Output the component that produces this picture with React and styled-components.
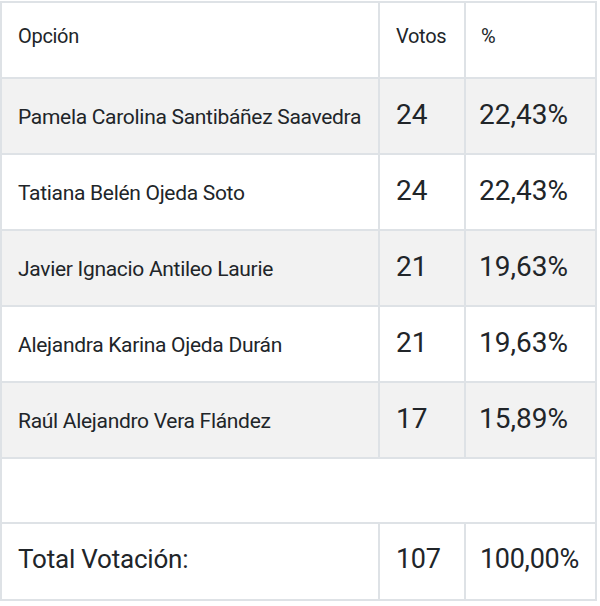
import React from "react";
import styled, { createGlobalStyle } from "styled-components";

const Global = createGlobalStyle`
  html, body { margin: 0; padding: 0; background: #fff; }
  body { font-family: Roboto, "Noto Sans", sans-serif; color: #212529; }
`;

const Wrap = styled.div`
  padding-top: 1px;
`;

const Table = styled.table`
  width: 597px;
  border-collapse: collapse;
  table-layout: fixed;
  border: 2px solid #dee2e6;
`;

const Row = styled.tr`
  height: ${(p) => p.$h}px;
  background: ${(p) => (p.$striped ? "#f2f2f2" : "#fff")};
`;

const Cell = styled.td`
  border: 2px solid #dee2e6;
  padding: ${(p) => p.$pad}px 12px 0 ${(p) => p.$left ?? 16}px;
  vertical-align: baseline;
  line-height: 1.2;
  font-size: ${(p) => p.$size}px;
  font-weight: 400;
  white-space: nowrap;
  letter-spacing: ${(p) => p.$ls || 0}px;
`;

const HeadCell = styled(Cell).attrs({ as: "th" })`
  text-align: left;
  font-weight: 400;
`;

const rows = [
  ["Pamela Carolina Santibáñez Saavedra", "24", "22,43%"],
  ["Tatiana Belén Ojeda Soto", "24", "22,43%"],
  ["Javier Ignacio Antileo Laurie", "21", "19,63%"],
  ["Alejandra Karina Ojeda Durán", "21", "19,63%"],
  ["Raúl Alejandro Vera Flández", "17", "15,89%"],
];

export default function App() {
  return (
    <Wrap>
      <Global />
      <Table>
        <colgroup>
          <col style={{ width: 378 }} />
          <col style={{ width: 86 }} />
          <col />
        </colgroup>
        <thead>
          <Row $h={76}>
            <HeadCell $pad={21} $size={20} $ls={-0.3}>Opción</HeadCell>
            <HeadCell $pad={21} $size={20} $ls={-0.3}>Votos</HeadCell>
            <HeadCell $pad={21} $size={20} $ls={-0.3} $left={15}>%</HeadCell>
          </Row>
        </thead>
        <tbody>
          {rows.map((r, i) => (
            <Row key={i} $h={76} $striped={i % 2 === 0}>
              <Cell $pad={19} $size={21} $ls={-0.3}>{r[0]}</Cell>
              <Cell $pad={19} $size={28}>{r[1]}</Cell>
              <Cell $pad={19} $size={28} $left={13}>{r[2]}</Cell>
            </Row>
          ))}
          <Row $h={65}>
            <Cell colSpan={3} $pad={0} $size={20} />
          </Row>
          <Row $h={77}>
            <Cell $pad={19} $size={26} $ls={-0.2}>Total Votación:</Cell>
            <Cell $pad={19} $size={27} $ls={-0.3}>107</Cell>
            <Cell $pad={19} $size={27} $ls={-0.3} $left={14}>100,00%</Cell>
          </Row>
        </tbody>
      </Table>
    </Wrap>
  );
}
